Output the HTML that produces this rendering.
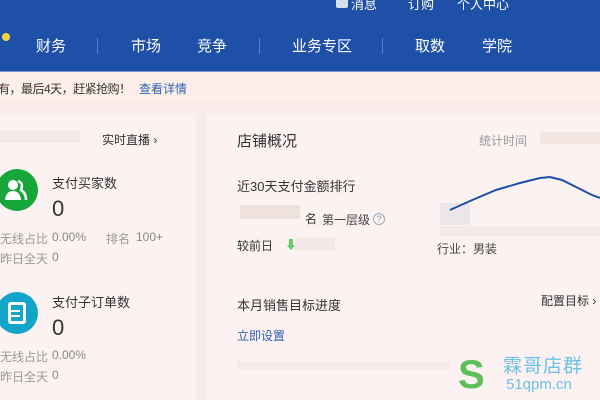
<!DOCTYPE html>
<html><head><meta charset="utf-8"><style>
*{margin:0;padding:0;box-sizing:border-box}
body{width:600px;height:400px;overflow:hidden;background:#f9ebeb;font-family:"Liberation Sans","Noto Sans CJK SC",sans-serif;position:relative;color:#333}
.a{position:absolute;white-space:nowrap}
.hdr{position:absolute;left:0;top:0;width:600px;height:71px;background:#1e50a8}
.nav{color:#fff;font-size:15px;top:35px}
.top{color:#fff;font-size:13px;top:-6px}
.sep{position:absolute;top:38px;width:1px;height:16px;background:#5b7fc4}
.notice{position:absolute;left:0;top:71px;width:600px;height:31px;background:#fdefe8;border-top:1px solid #7a95c8}
.card{position:absolute;background:#fdf2f2}
.g{color:#999}
.blur{position:absolute;background:#efe2dc}
</style></head><body>
<div class="hdr"></div>
<div class="a top" style="left:336px;width:12px;height:10px;top:-2px;background:#d8e0ee;border-radius:2px"></div>
<div class="a top" style="left:351px">消息</div>
<div class="a top" style="left:408px">订购</div>
<div class="a top" style="left:457px">个人中心</div>
<div class="a" style="left:2px;top:33px;width:8px;height:8px;border-radius:50%;background:#f5d442"></div>
<div class="a nav" style="left:36px">财务</div>
<div class="sep" style="left:97px"></div>
<div class="a nav" style="left:131px">市场</div>
<div class="a nav" style="left:197px">竞争</div>
<div class="sep" style="left:259px"></div>
<div class="a nav" style="left:292px">业务专区</div>
<div class="sep" style="left:382px"></div>
<div class="a nav" style="left:415px">取数</div>
<div class="a nav" style="left:482px">学院</div>
<div class="notice"></div>
<div class="a" style="left:-2px;top:80px;font-size:12px;color:#333;letter-spacing:-0.5px">有，最后4天，赶紧抢购！</div>
<div class="a" style="left:139px;top:80px;font-size:12px;color:#2f5fb3">查看详情</div>

<div class="card" style="left:0;top:113px;width:196px;height:287px"></div>
<div class="card" style="left:207px;top:113px;width:393px;height:287px"></div>

<div class="blur" style="left:0;top:131px;width:80px;height:12px;background:#f3e9e6"></div>
<div class="a" style="left:102px;top:131px;font-size:12px;color:#333">实时直播 ›</div>
<div class="a" style="left:-4px;top:169px;width:42px;height:42px;border-radius:50%;background:#17a639"></div>
<svg class="a" style="left:3px;top:178px" width="26" height="24"><circle cx="10" cy="7" r="5" fill="#fff"/><path d="M2 22 Q3 13 10 13 Q17 13 18 22Z" fill="#fff"/><path d="M15 3 Q21 5 18 12 Q23 15 23 22" stroke="#fff" stroke-width="2.5" fill="none"/></svg>
<div class="a" style="left:52px;top:173px;font-size:13px">支付买家数</div>
<div class="a" style="left:52px;top:196px;font-size:22px">0</div>
<div class="a g" style="left:0;top:230px;font-size:12px">无线占比</div>
<div class="a" style="left:52px;top:230px;font-size:12px;color:#888">0.00%</div>
<div class="a g" style="left:106px;top:230px;font-size:12px">排名</div>
<div class="a" style="left:136px;top:230px;font-size:12px;color:#888">100+</div>
<div class="a g" style="left:0;top:250px;font-size:12px">昨日全天</div>
<div class="a" style="left:52px;top:250px;font-size:12px;color:#888">0</div>
<div class="a" style="left:-4px;top:292px;width:42px;height:42px;border-radius:50%;background:#13a5c9"></div>
<div class="a" style="left:8px;top:302px;width:18px;height:22px;border:3px solid #fff;border-radius:3px"></div>
<div class="a" style="left:11px;top:310px;width:9px;height:2px;background:#fff"></div>
<div class="a" style="left:11px;top:315px;width:9px;height:2px;background:#fff"></div>
<div class="a" style="left:52px;top:292px;font-size:13px">支付子订单数</div>
<div class="a" style="left:52px;top:315px;font-size:22px">0</div>
<div class="a g" style="left:0;top:348px;font-size:12px">无线占比</div>
<div class="a" style="left:52px;top:348px;font-size:12px;color:#888">0.00%</div>
<div class="a g" style="left:0;top:368px;font-size:12px">昨日全天</div>
<div class="a" style="left:52px;top:368px;font-size:12px;color:#888">0</div>

<div class="a" style="left:237px;top:130px;font-size:15px">店铺概况</div>
<div class="a g" style="left:479px;top:132px;font-size:12px">统计时间</div>
<div class="blur" style="left:540px;top:132px;width:60px;height:12px;background:#f3e6e0"></div>
<div class="a" style="left:237px;top:176px;font-size:13px">近30天支付金额排行</div>
<div class="blur" style="left:240px;top:205px;width:60px;height:14px"></div>
<div class="a" style="left:305px;top:210px;font-size:12px">名</div>
<div class="a" style="left:322px;top:211px;font-size:12px;color:#444">第一层级</div>
<div class="a" style="left:373px;top:213px;width:12px;height:12px;border:1px solid #9ab;border-radius:50%;font-size:9px;color:#89a;text-align:center;line-height:10px">?</div>
<div class="a" style="left:237px;top:237px;font-size:12px">较前日</div>
<div class="a" style="left:285px;top:236px;font-size:12px;color:#6c6">⬇</div>
<div class="blur" style="left:295px;top:237px;width:40px;height:14px;background:#f3e8e6"></div>
<svg class="a" style="left:440px;top:170px" width="160" height="60"><rect x="0" y="33" width="30" height="22" fill="#ebe6ea"/><path d="M10 40 L30 31 L56 20 L80 13 L100 8 L110 7 L122 10 L140 19 L152 25 L160 28" stroke="#1e50a8" stroke-width="2" fill="none"/></svg>
<div class="blur" style="left:440px;top:226px;width:160px;height:10px;background:#f4e9e6"></div>
<div class="a" style="left:437px;top:240px;font-size:12px;color:#444">行业：男装</div>
<div class="a" style="left:237px;top:295px;font-size:13px">本月销售目标进度</div>
<div class="a" style="left:541px;top:292px;font-size:12px">配置目标 ›</div>
<div class="a" style="left:237px;top:327px;font-size:12px;color:#2f5fb3">立即设置</div>
<div class="blur" style="left:237px;top:361px;width:213px;height:8px;background:#f6ebe8"></div>
<div class="a" style="left:450px;top:350px;width:150px;height:50px;background:#fcf1f1"></div>
<div class="a" style="left:458px;top:355px;font-size:40px;font-weight:bold;color:#5cbf5a;line-height:40px">S</div>
<div class="a" style="left:503px;top:351px;font-size:19px;color:#6cc1e8;letter-spacing:1px">霖哥店群</div>
<div class="a" style="left:506px;top:376px;font-size:15px;color:#6cc1e8">51qpm.cn</div>
</body></html>
